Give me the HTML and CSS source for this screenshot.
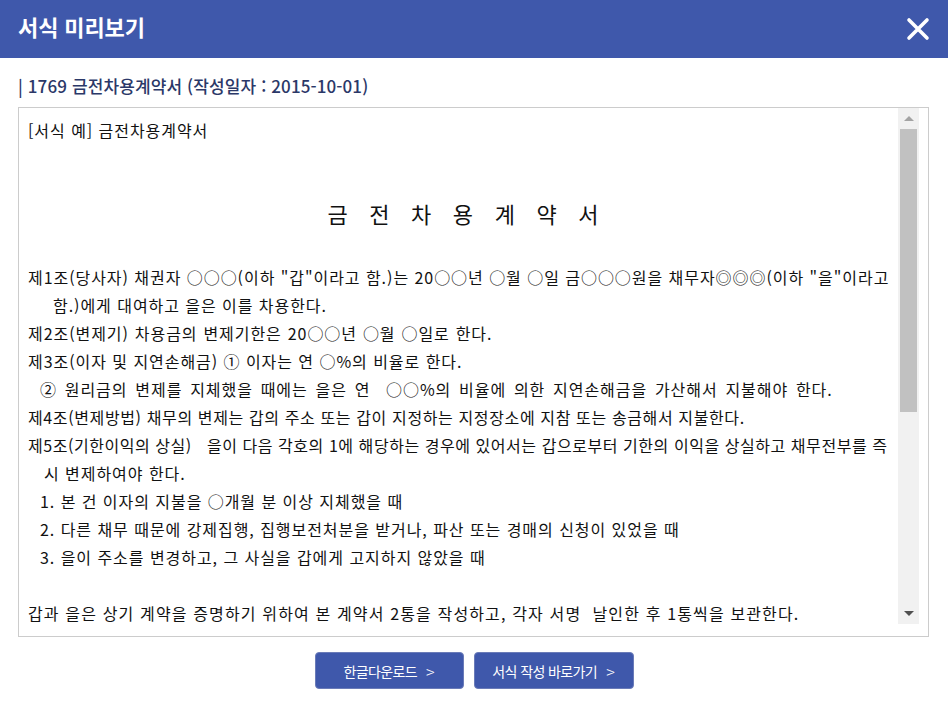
FILE: index.html
```html
<!DOCTYPE html>
<html lang="ko">
<head>
<meta charset="utf-8">
<title>서식 미리보기</title>
<link rel="stylesheet" href="styles.css">
</head>
<body>
<div class="modal">
  <header class="head">
    <h1 class="head-title">서식 미리보기</h1>
    <button class="close" aria-label="닫기">
      <svg width="24" height="24" viewBox="0 0 24 24"><path d="M3 3 L21 21 M21 3 L3 21" stroke="#fff" stroke-width="3.6" stroke-linecap="round" fill="none"/></svg>
    </button>
  </header>
  <div class="sub">| 1769 금전차용계약서 (작성일자 : 2015-10-01)</div>
  <div class="box">
    <div class="viewer">
      <div class="content">
        <p class="line">[서식 예] 금전차용계약서</p>
        <p class="doc-title">금 전 차 용 계 약 서</p>
        <p class="line">제1조(당사자) 채권자 ○○○(이하 "갑"이라고 함.)는 20○○년 ○월 ○일 금○○○원을 채무자◎◎◎(이하 "을"이라고</p>
        <p class="line ind1">함.)에게 대여하고 을은 이를 차용한다.</p>
        <p class="line spread-lg">제2조(변제기) 차용금의 변제기한은 20○○년 ○월 ○일로 한다.</p>
        <p class="line">제3조(이자 및 지연손해금) ① 이자는 연 ○%의 비율로 한다.</p>
        <p class="line ind2 spread-md">② 원리금의 변제를 지체했을 때에는 을은 연 &nbsp;○○%의 비율에 의한 지연손해금을 가산해서 지불해야 한다.</p>
        <p class="line narrow">제4조(변제방법) 채무의 변제는 갑의 주소 또는 갑이 지정하는 지정장소에 지참 또는 송금해서 지불한다.</p>
        <p class="line tight">제5조(기한이익의 상실) &nbsp; 을이 다음 각호의 1에 해당하는 경우에 있어서는 갑으로부터 기한의 이익을 상실하고 채무전부를 즉</p>
        <p class="line ind3">시 변제하여야 한다.</p>
        <p class="line ind2">1. 본 건 이자의 지불을 ○개월 분 이상 지체했을 때</p>
        <p class="line ind2">2. 다른 채무 때문에 강제집행, 집행보전처분을 받거나, 파산 또는 경매의 신청이 있었을 때</p>
        <p class="line ind2">3. 을이 주소를 변경하고, 그 사실을 갑에게 고지하지 않았을 때</p>
        <p class="line">&nbsp;</p>
        <p class="line loose">갑과 을은 상기 계약을 증명하기 위하여 본 계약서 2통을 작성하고, 각자 서명 &nbsp;날인한 후 1통씩을 보관한다.</p>
      </div>
      <div class="scrollbar">
        <div class="arrow up"></div>
        <div class="track">
          <div class="thumb"></div>
        </div>
        <div class="arrow down"></div>
      </div>
    </div>
  </div>
  <div class="actions">
    <button class="btn btn-hwp">한글다운로드<span class="chev">&gt;</span></button>
    <button class="btn btn-go">서식 작성 바로가기<span class="chev">&gt;</span></button>
  </div>
</div>
</body>
</html>
```

FILE: styles.css
```css
html, body {
  margin: 0;
  padding: 0;
  background: #fff;
}
body {
  font-family: "Noto Sans CJK KR", "Noto Sans", sans-serif;
  width: 948px;
  height: 706px;
  overflow: hidden;
}
.head {
  height: 58px;
  background: #3f58ab;
  display: flex;
  align-items: center;
  justify-content: space-between;
  padding: 0 18px 0 18px;
}
.head-title {
  margin: 0;
  color: #fff;
  font-size: 22px;
  font-weight: 700;
  letter-spacing: -0.1px;
  line-height: 1;
  padding-bottom: 6px;
}
.close {
  border: 0;
  background: none;
  padding: 0;
  width: 24px;
  height: 24px;
  display: flex;
  cursor: pointer;
}
.sub {
  padding: 17px 18px 0 18px;
  height: 32px;
  line-height: 22px;
  font-size: 17px;
  font-weight: 500;
  letter-spacing: 0.12px;
  color: #2b3868;
}
.box {
  margin: 0 19px 0 18px;
  border: 1px solid #cccccc;
  padding: 0 9px 12px 0;
  height: 516px;
}
.viewer {
  display: flex;
  height: 516px;
}
.content {
  flex: 1;
  overflow: hidden;
  padding: 8px 0 0 9px;
  font-size: 16px;
  letter-spacing: 0.95px;
  color: #111;
}
.line {
  margin: 0;
  height: 28px;
  line-height: 28px;
  white-space: nowrap;
}
.ind1 { padding-left: 25px; }
.ind2 { padding-left: 12px; }
.ind3 { padding-left: 16px; }
.spread-lg { word-spacing: 0.5px; }
.spread-md { word-spacing: 2.4px; }
.tight { letter-spacing: 0.55px; }
.narrow { letter-spacing: 0.62px; }
.loose { letter-spacing: 1.14px; }
.doc-title {
  margin: 49px 0 30px 0;
  height: 40px;
  line-height: 40px;
  text-align: center;
  font-size: 22px;
  letter-spacing: 7.7px;
  padding-left: 7.7px;
  white-space: nowrap;
}
.scrollbar {
  width: 21px;
  background: #f1f1f1;
  display: flex;
  flex-direction: column;
}
.arrow {
  height: 21px;
  display: flex;
  align-items: center;
  justify-content: center;
}
.arrow::before {
  content: "";
  width: 0;
  height: 0;
  border-left: 5px solid transparent;
  border-right: 5px solid transparent;
}
.up::before { border-bottom: 5px solid #a3a3a3; }
.down::before { border-top: 5px solid #505050; }
.track {
  flex: 1;
  padding: 0 2px;
}
.thumb {
  height: 283px;
  background: #c1c1c1;
}
.actions {
  display: flex;
  justify-content: center;
  gap: 10px;
  padding-top: 15px;
}
.btn {
  height: 37px;
  background: #3f58ab;
  color: #fff;
  border: 1px solid #6a7bb8;
  border-radius: 4px;
  font-family: "Noto Sans CJK KR", sans-serif;
  font-size: 14px;
  letter-spacing: -0.6px;
  padding: 0;
  cursor: pointer;
  display: flex;
  align-items: center;
  justify-content: center;
}
.chev {
  margin-left: 9px;
  font-size: 16px;
  font-weight: 300;
  letter-spacing: 0;
}
.btn-hwp { width: 149px; }
.btn-go { width: 160px; }
```
